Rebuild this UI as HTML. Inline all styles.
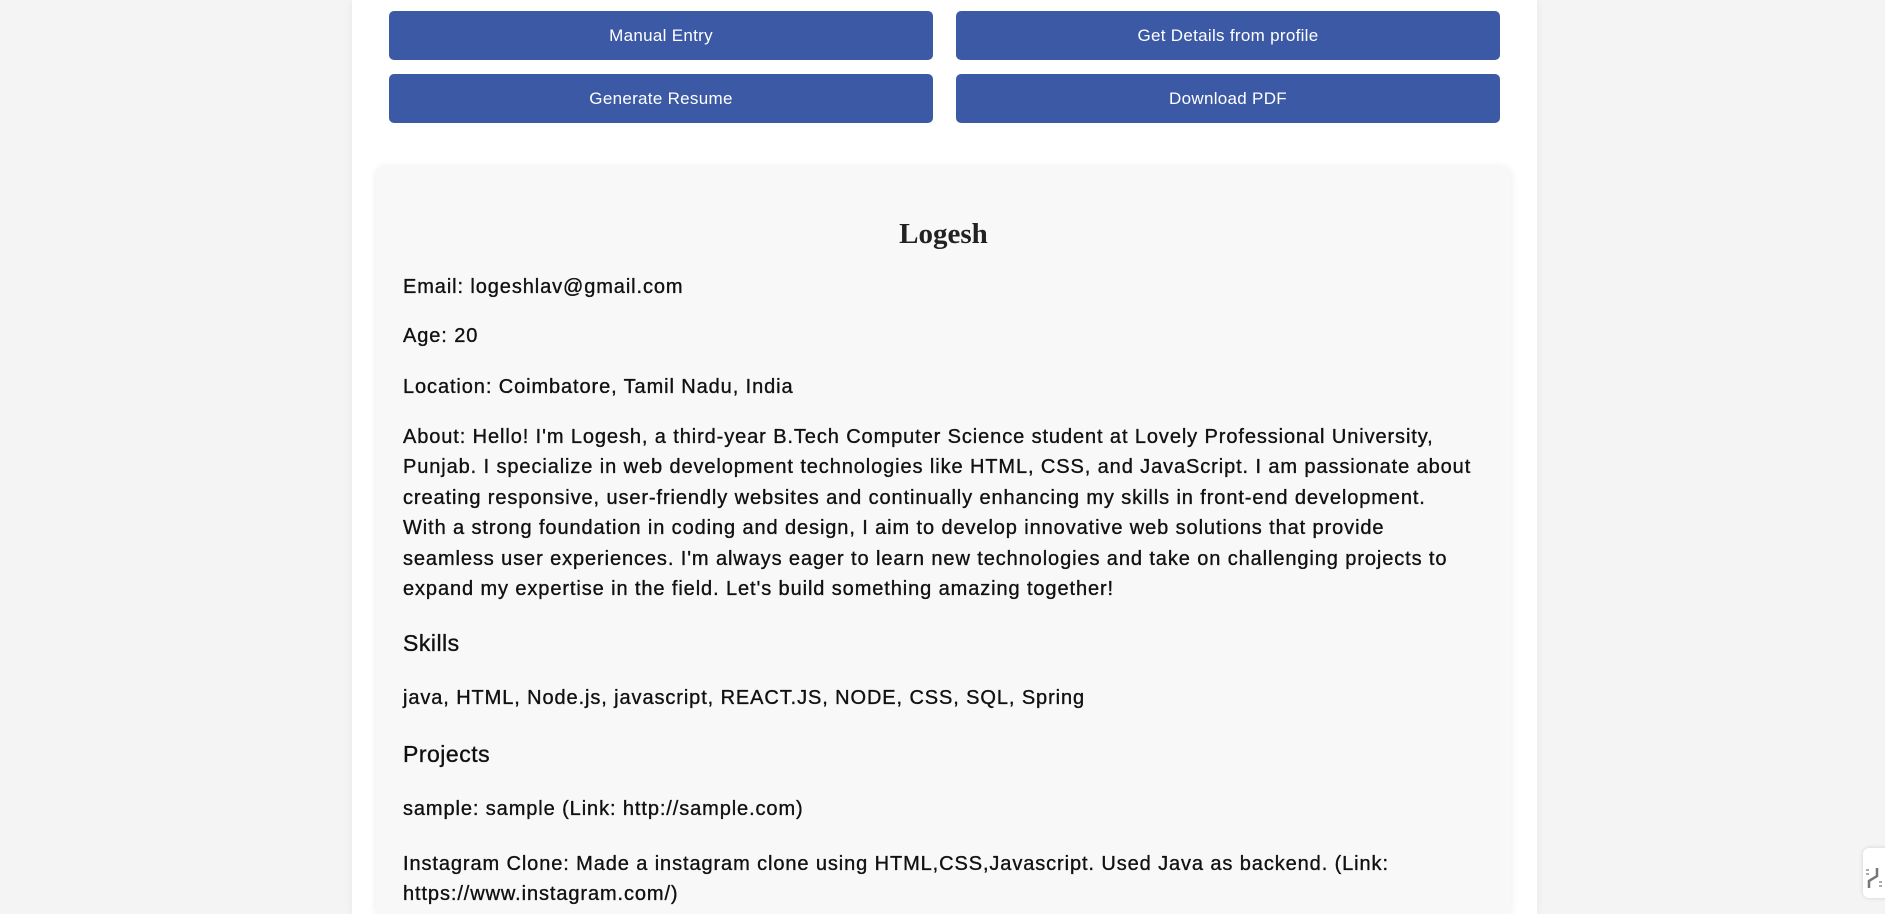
<!DOCTYPE html>
<html><head><meta charset="utf-8"><style>
html,body{margin:0;padding:0;width:1885px;height:914px;overflow:hidden;}
body{background:#f4f4f4;font-family:"Liberation Sans",sans-serif;position:relative;}
.wrap{position:absolute;left:352px;top:0;width:1185px;height:914px;background:#fff;box-shadow:0 0 8px rgba(0,0,0,0.06);}
.btn{position:absolute;height:49px;background:#3b59a5;color:#fff;border-radius:5px;font-size:17px;letter-spacing:0.3px;display:flex;align-items:center;justify-content:center;}
.card{position:absolute;left:376px;top:167px;width:1135px;height:747px;background:#f8f8f8;border-radius:8px 8px 0 0;box-shadow:0 0 8px rgba(0,0,0,0.08);}
.t{position:absolute;left:403px;font-size:20px;letter-spacing:0.9px;color:#111;white-space:nowrap;-webkit-text-stroke:0.35px #111;}
h1{position:absolute;left:376px;width:1135px;top:218px;margin:0;text-align:center;font-family:"Liberation Serif",serif;font-size:29px;font-weight:bold;color:#222;}
.h{font-size:23px;letter-spacing:0.5px;}
.widget{position:absolute;left:1863px;top:848px;width:30px;height:50px;background:#fff;border-radius:6px;box-shadow:0 0 4px rgba(0,0,0,0.15);}
</style></head><body>
<div class="wrap"></div>
<div class="btn" style="left:389px;top:11px;width:544px">Manual Entry</div>
<div class="btn" style="left:956px;top:11px;width:544px">Get Details from profile</div>
<div class="btn" style="left:389px;top:74px;width:544px">Generate Resume</div>
<div class="btn" style="left:956px;top:74px;width:544px">Download PDF</div>
<div class="card"></div>
<h1>Logesh</h1>
<div class="t" style="top:276px">Email: logeshlav@gmail.com</div>
<div class="t" style="top:325px">Age: 20</div>
<div class="t" style="top:376px">Location: Coimbatore, Tamil Nadu, India</div>
<div class="t" style="top:422px;line-height:30.4px">About: Hello! I'm Logesh, a third-year B.Tech Computer Science student at Lovely Professional University,<br>Punjab. I specialize in web development technologies like HTML, CSS, and JavaScript. I am passionate about<br>creating responsive, user-friendly websites and continually enhancing my skills in front-end development.<br>With a strong foundation in coding and design, I aim to develop innovative web solutions that provide<br>seamless user experiences. I'm always eager to learn new technologies and take on challenging projects to<br>expand my expertise in the field. Let's build something amazing together!</div>
<div class="t h" style="top:630px">Skills</div>
<div class="t" style="top:687px">java, HTML, Node.js, javascript, REACT.JS, NODE, CSS, SQL, Spring</div>
<div class="t h" style="top:741px">Projects</div>
<div class="t" style="top:798px">sample: sample (Link: http://sample.com)</div>
<div class="t" style="top:849px;line-height:30px">Instagram Clone: Made a instagram clone using HTML,CSS,Javascript. Used Java as backend. (Link:<br>https://www.instagram.com/)</div>
<div class="widget"><svg width="30" height="50" viewBox="0 0 30 50"><path d="M6 40 L6 33 L14 28 L14 20" stroke="#777" stroke-width="2.5" fill="none"/><path d="M3 22h3M3 26h3M16 34h3M16 38h3" stroke="#aaa" stroke-width="2"/></svg></div>
</body></html>
